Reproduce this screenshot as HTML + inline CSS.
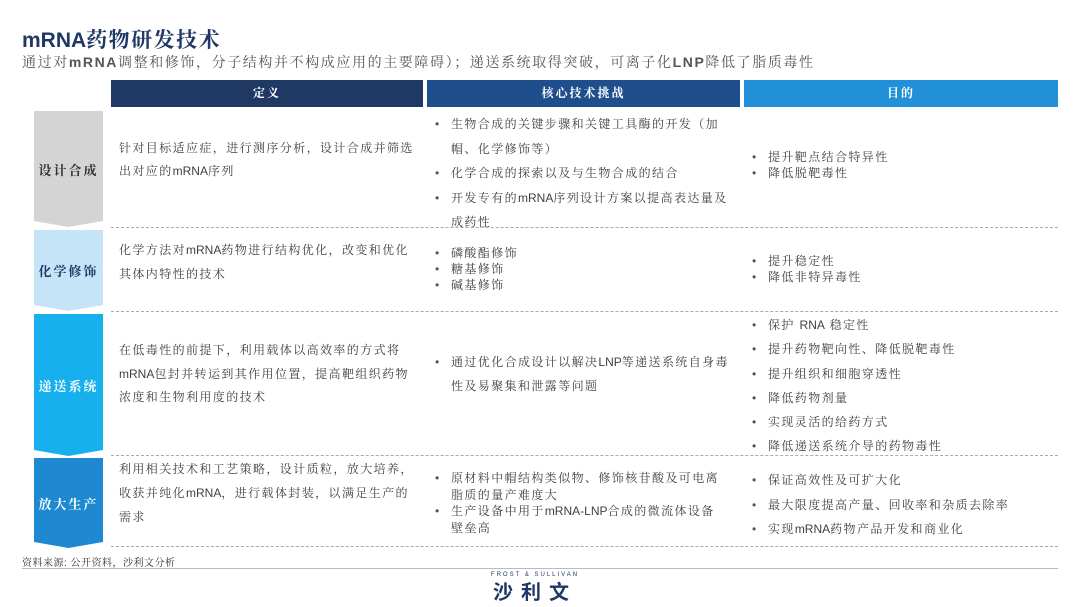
<!DOCTYPE html>
<html><head><meta charset="utf-8"><style>
*{margin:0;padding:0;box-sizing:border-box}
body{width:1080px;height:607px;background:#fff;position:relative;overflow:hidden;font-family:"Liberation Sans","Noto Serif CJK SC","Noto Sans CJK SC",sans-serif;color:#404040}
.a{position:absolute}
.t{font-size:12px;white-space:nowrap;letter-spacing:1.4px}
.hd{position:absolute;top:80px;height:27px;color:#fff;font-size:12px;font-weight:bold;text-align:center;line-height:27px;letter-spacing:2px}
.lb{position:absolute;left:34px;width:69px;font-size:13px;font-weight:bold;letter-spacing:2px;display:flex;align-items:center;justify-content:center;clip-path:polygon(0 0,100% 0,100% calc(100% - 6px),50% 100%,0 calc(100% - 6px))}
.dl{position:absolute;left:111px;width:947px;border-top:1px dashed #aaa}
ul{list-style:none}
li{position:relative;padding-left:16px;font-size:12px;white-space:nowrap;letter-spacing:1.4px}
li:before{content:"•";position:absolute;left:0;color:#555}
.l{letter-spacing:0}
</style></head><body>
<div class="a" style="left:22px;top:24px;font-size:21px;font-weight:bold;color:#1f3864;letter-spacing:1.5px"><span class="l">mRNA</span>药物研发技术</div>
<div class="a" style="left:22px;top:52px;font-size:14px;color:#555;white-space:nowrap;letter-spacing:1.6px">通过对<b>mRNA</b>调整和修饰，分子结构并不构成应用的主要障碍）；递送系统取得突破，可离子化<b>LNP</b>降低了脂质毒性</div>

<div class="hd" style="left:111px;width:312px;background:#1f3864">定义</div>
<div class="hd" style="left:427px;width:313px;background:#1e4e8c">核心技术挑战</div>
<div class="hd" style="left:744px;width:314px;background:#2190d8">目的</div>

<div class="lb" style="top:111px;height:116px;background:#d4d4d4;color:#333">设计合成</div>
<div class="lb" style="top:230px;height:81px;background:#c6e4f8;color:#1f3864">化学修饰</div>
<div class="lb" style="top:314px;height:142px;background:#16b0ee;color:#fff">递送系统</div>
<div class="lb" style="top:458px;height:90px;background:#1e88d0;color:#fff">放大生产</div>

<div class="dl" style="top:227px"></div>
<div class="dl" style="top:311px"></div>
<div class="dl" style="top:455px"></div>
<div class="dl" style="top:546px"></div>

<!-- row1 -->
<div class="a t" style="left:119px;top:137px;line-height:23px">针对目标适应症，进行测序分析，设计合成并筛选<br>出对应的<span class="l">mRNA</span>序列</div>
<ul class="a" style="left:435px;top:112px;line-height:24.5px">
<li>生物合成的关键步骤和关键工具酶的开发（加<br>帽、化学修饰等）</li>
<li>化学合成的探索以及与生物合成的结合</li>
<li>开发专有的<span class="l">mRNA</span>序列设计方案以提高表达量及<br>成药性</li></ul>
<ul class="a" style="left:752px;top:149px;line-height:16px">
<li>提升靶点结合特异性</li><li>降低脱靶毒性</li></ul>
<!-- row2 -->
<div class="a t" style="left:119px;top:238px;line-height:24px">化学方法对<span class="l">mRNA</span>药物进行结构优化，改变和优化<br>其体内特性的技术</div>
<ul class="a" style="left:435px;top:245px;line-height:16px">
<li>磷酸酯修饰</li><li>糖基修饰</li><li>碱基修饰</li></ul>
<ul class="a" style="left:752px;top:253px;line-height:16px">
<li>提升稳定性</li><li>降低非特异毒性</li></ul>
<!-- row3 -->
<div class="a t" style="left:119px;top:339px;line-height:23.5px">在低毒性的前提下，利用载体以高效率的方式将<br><span class="l">mRNA</span>包封并转运到其作用位置，提高靶组织药物<br>浓度和生物利用度的技术</div>
<ul class="a" style="left:435px;top:350px;line-height:24px">
<li>通过优化合成设计以解决<span class="l">LNP</span>等递送系统自身毒<br>性及易聚集和泄露等问题</li></ul>
<ul class="a" style="left:752px;top:313px;line-height:24.3px">
<li>保护 <span class="l">RNA</span> 稳定性</li><li>提升药物靶向性、降低脱靶毒性</li><li>提升组织和细胞穿透性</li><li>降低药物剂量</li><li>实现灵活的给药方式</li><li>降低递送系统介导的药物毒性</li></ul>
<!-- row4 -->
<div class="a t" style="left:119px;top:457px;line-height:24px">利用相关技术和工艺策略，设计质粒，放大培养，<br>收获并纯化<span class="l">mRNA</span>，进行载体封装，以满足生产的<br>需求</div>
<ul class="a" style="left:435px;top:470px;line-height:16.5px">
<li>原材料中帽结构类似物、修饰核苷酸及可电离<br>脂质的量产难度大</li>
<li>生产设备中用于<span class="l">mRNA-LNP</span>合成的微流体设备<br>壁垒高</li></ul>
<ul class="a" style="left:752px;top:468px;line-height:24.5px">
<li>保证高效性及可扩大化</li><li>最大限度提高产量、回收率和杂质去除率</li><li>实现<span class="l">mRNA</span>药物产品开发和商业化</li></ul>

<div class="a" style="left:22px;top:554px;font-size:10px;color:#333;white-space:nowrap;letter-spacing:0.5px">资料来源: 公开资料，沙利文分析</div>
<div class="a" style="left:22px;top:568px;width:1036px;border-top:1px solid #bbb"></div>
<div class="a" style="left:483px;top:572px;width:104px;text-align:center;font-size:6px;letter-spacing:2px;color:#1f3864;white-space:nowrap">FROST &amp; SULLIVAN</div>
<div class="a" style="left:483px;top:580px;width:104px;text-align:center;font-size:20px;font-weight:bold;letter-spacing:8px;color:#1f3864;font-family:'Noto Sans CJK SC',sans-serif;line-height:22px">沙利文</div>
</body></html>
